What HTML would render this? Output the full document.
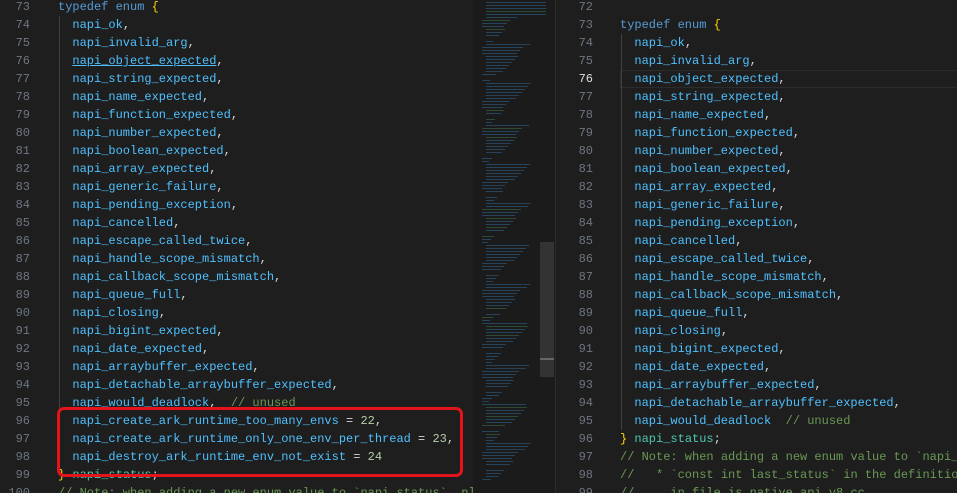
<!DOCTYPE html>
<html><head><meta charset="utf-8"><style>
html,body{margin:0;width:957px;height:493px;overflow:hidden;}
body{background:#1e1e1e;position:relative;font-family:"Liberation Mono",monospace;font-size:12px;}
#L{position:absolute;left:0;top:0;width:957px;height:493px;overflow:hidden;}
.ln{position:absolute;text-align:right;color:#6e7681;width:30px;}
.l{position:absolute;white-space:pre;height:18px;line-height:18px;color:#4fc1ff;}
.k{color:#569cd6}.c{color:#6a9955}.n{color:#b5cea8}.t{color:#4ec9b0}.b{color:#ffd700}.p{color:#d4d4d4}
.mm div{height:1px;margin-bottom:2px;}
</style></head><body>
<div id="L"></div>
<div style="position:absolute;left:473px;top:0;width:82px;height:493px;background:#1b1b1b"></div>
<div class="mm" style="position:absolute;left:478px;top:2px;width:70px;height:480px;overflow:hidden" id="mm"></div>
<div style="position:absolute;left:540px;top:242px;width:14px;height:135px;background:#333"></div>
<div style="position:absolute;left:540px;top:358px;width:14px;height:2px;background:#666"></div>
<div style="position:absolute;left:555px;top:0;width:1px;height:493px;background:#2b2b2b"></div>
<div style="position:absolute;left:57px;top:407px;width:400px;height:64px;border:3px solid #e3141c;border-radius:7px"></div>
<script>
const P='<span class="p">,</span>';
const mk=(u)=>[
['<span class="k">typedef enum</span> <span class="b">{</span>',0],
['napi_ok'+P,1],['napi_invalid_arg'+P,1],
[(u?'<span style="text-decoration:underline">napi_object_expected</span>':'napi_object_expected')+P,1],
['napi_string_expected'+P,1],['napi_name_expected'+P,1],
['napi_function_expected'+P,1],['napi_number_expected'+P,1],
['napi_boolean_expected'+P,1],['napi_array_expected'+P,1],
['napi_generic_failure'+P,1],['napi_pending_exception'+P,1],
['napi_cancelled'+P,1],['napi_escape_called_twice'+P,1],
['napi_handle_scope_mismatch'+P,1],['napi_callback_scope_mismatch'+P,1],
['napi_queue_full'+P,1],['napi_closing'+P,1],
['napi_bigint_expected'+P,1],['napi_date_expected'+P,1],
['napi_arraybuffer_expected'+P,1],['napi_detachable_arraybuffer_expected'+P,1]];
let h='';
const L=mk(true).concat([
['napi_would_deadlock'+P+'  <span class="c">// unused</span>',1],
['napi_create_ark_runtime_too_many_envs <span class="p">=</span> <span class="n">22</span>'+P,1],
['napi_create_ark_runtime_only_one_env_per_thread <span class="p">=</span> <span class="n">23</span>'+P,1],
['napi_destroy_ark_runtime_env_not_exist <span class="p">=</span> <span class="n">24</span>',1],
['<span class="b">}</span> <span class="t">napi_status</span><span class="p">;</span>',0],
['<span class="c">// Note: when adding a new enum value to `napi_status`, pl</span>',0]]);
L.forEach((r,i)=>{const y=-2+i*18;
h+=`<div class="l ln" style="left:0;top:${y}px;color:#6e7681">${73+i}</div>`;
h+=`<div class="l" style="left:${58+r[1]*14.4}px;top:${y}px">${r[0]}</div>`;
if(r[1])h+=`<div style="position:absolute;left:59px;top:${y}px;width:1px;height:18px;background:#404040"></div>`;});
const R=[['',0]].concat(mk(false)).concat([
['napi_would_deadlock  <span class="c">// unused</span>',1],
['<span class="b">}</span> <span class="t">napi_status</span><span class="p">;</span>',0],
['<span class="c">// Note: when adding a new enum value to `napi_status`, pl</span>',0],
['<span class="c">//   * `const int last_status` in the definition of</span>',0],
['<span class="c">//     in file is native_api_v8.cc</span>',0]]);
R.forEach((r,i)=>{const y=-2+i*18;const n=72+i;
if(n==76)h+=`<div style="position:absolute;left:620px;top:${y}px;width:337px;height:16px;border:1px solid #2c2c2c"></div>`;
h+=`<div class="l ln" style="left:563px;top:${y}px;color:${n==76?'#ddd':'#6e7681'}">${n}</div>`;
h+=`<div class="l" style="left:${620+r[1]*14.4}px;top:${y}px">${r[0]}</div>`;
if(r[1])h+=`<div style="position:absolute;left:621px;top:${y}px;width:1px;height:18px;background:#404040"></div>`;});
document.getElementById('L').innerHTML=h;
let m='';const cols=['#2f6690','#42704f','#356088'];
for(let i=0;i<160;i++){let w=6+((i*37)%40);let c=cols[(i*7)%11<7?0:(i%3==0?1:2)];if(i<5)w=60;
if(i%13==12)w=0;
m+=`<div style="width:${w}px;margin-left:${(i%9<6)?8:4}px;background:${c};opacity:.55"></div>`;}
document.getElementById('mm').innerHTML=m;
</script>
</body></html>
